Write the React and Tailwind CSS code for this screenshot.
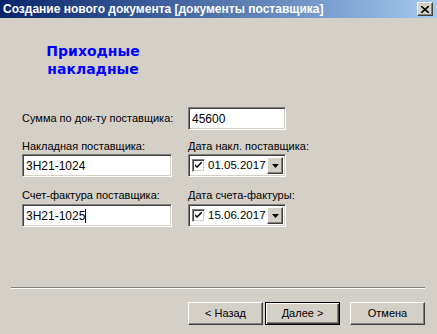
import React from 'react';

// classic win9x bevels
const sunken =
  'border border-t-[#808080] border-l-[#808080] border-b-white border-r-white shadow-[inset_1px_1px_0_#404040,inset_-1px_-1px_0_#d4d0c8] bg-white';
const raised =
  'border border-t-white border-l-white border-b-[#404040] border-r-[#404040] shadow-[inset_-1px_-1px_0_#808080] bg-[#d4d0c8]';

const Field = ({ value, caret, className = '' }) => (
  <div className={`${sunken} h-[23px] flex items-center pl-[3px] text-[12px] ${className}`}>
    <span>{value}</span>
    {caret && <span className="w-px h-[14px] bg-black" />}
  </div>
);

const DateField = ({ value }) => (
  <div className={`${sunken} h-[23px] w-[98px] flex items-center pl-[3px] pr-[2px]`}>
    <div className={`${sunken} w-[13px] h-[13px] flex items-center justify-center`}>
      <svg width="7" height="7" viewBox="0 0 7 7">
        <path d="M0 2 L0 4 L2 6 L7 1 L7 -1 L2 4 Z" fill="#000" />
      </svg>
    </div>
    <span className="ml-[3px] text-[11.5px]">{value}</span>
    <div className={`${raised} ml-auto w-[16px] h-[17px] flex items-center justify-center`}>
      <svg width="7" height="4" viewBox="0 0 7 4">
        <path d="M0 0 H7 L3.5 4 Z" fill="#000" />
      </svg>
    </div>
  </div>
);

const Label = ({ children, className = '' }) => (
  <div className={`h-[14px] leading-[14px] ${className}`}>{children}</div>
);

const Button = ({ children, primary }) => (
  <div
    className={
      primary
        ? 'w-[75px] h-[23px] flex items-center justify-center bg-[#d4d0c8] border border-black shadow-[inset_1px_1px_0_#fff,inset_-1px_-1px_0_#404040,inset_-2px_-2px_0_#808080]'
        : `${raised} w-[75px] h-[23px] flex items-center justify-center`
    }
  >
    {children}
  </div>
);

export default function App() {
  return (
    <div
      className="w-[437px] h-[334px] bg-[#d4d0c8] text-black text-[11px] overflow-hidden flex flex-col"
      style={{ fontFamily: '"Liberation Sans", Arial, sans-serif' }}
    >
      {/* title bar */}
      <div className="h-[18px] flex items-center pl-[3px] pr-[4px] bg-gradient-to-r from-[#0a246a] to-[#a6caf0]">
        <span className="text-white font-bold text-[12px] flex-1">
          Создание нового документа [документы поставщика]
        </span>
        <div className={`${raised} w-[16px] h-[14px] flex items-center justify-center`}>
          <svg width="8" height="7" viewBox="0 0 8 7">
            <path d="M0 0 L8 7 M8 0 L0 7" stroke="#000" strokeWidth="1.6" />
          </svg>
        </div>
      </div>

      <div className="pl-[22px] flex-1 flex flex-col">
        <div
          className="mt-[24px] w-[142px] text-center text-[#0000ff] font-bold text-[14px] leading-[18px]"
          style={{ fontFamily: '"DejaVu Sans", Verdana, sans-serif' }}
        >
          Приходные
          <br />
          накладные
        </div>

        <div className="mt-[29px] flex items-center">
          <div className="w-[166px]">Сумма по док-ту поставщика:</div>
          <Field value="45600" className="w-[98px]" />
        </div>

        <div className="mt-[9px] flex">
          <div className="w-[166px]">
            <Label>Накладная поставщика:</Label>
            <Field value="3Н21-1024" className="mt-px w-[150px]" />
          </div>
          <div>
            <Label>Дата накл. поставщика:</Label>
            <div className="mt-px">
              <DateField value="01.05.2017" />
            </div>
          </div>
        </div>

        <div className="mt-[11px] flex">
          <div className="w-[166px]">
            <Label>Счет-фактура поставщика:</Label>
            <Field value="3Н21-1025" caret className="mt-[2px] w-[150px]" />
          </div>
          <div>
            <Label>Дата счета-фактуры:</Label>
            <div className="mt-[2px]">
              <DateField value="15.06.2017" />
            </div>
          </div>
        </div>
      </div>

      <div className="mx-[11px] w-[414px] border-t border-t-[#808080] border-b border-b-white" />

      <div className="mt-[13px] mb-[9px] flex justify-end pr-[12px]">
        <Button>&lt; Назад</Button>
        <div className="ml-[2px]">
          <Button primary>Далее &gt;</Button>
        </div>
        <div className="ml-[10px]">
          <Button>Отмена</Button>
        </div>
      </div>
    </div>
  );
}
